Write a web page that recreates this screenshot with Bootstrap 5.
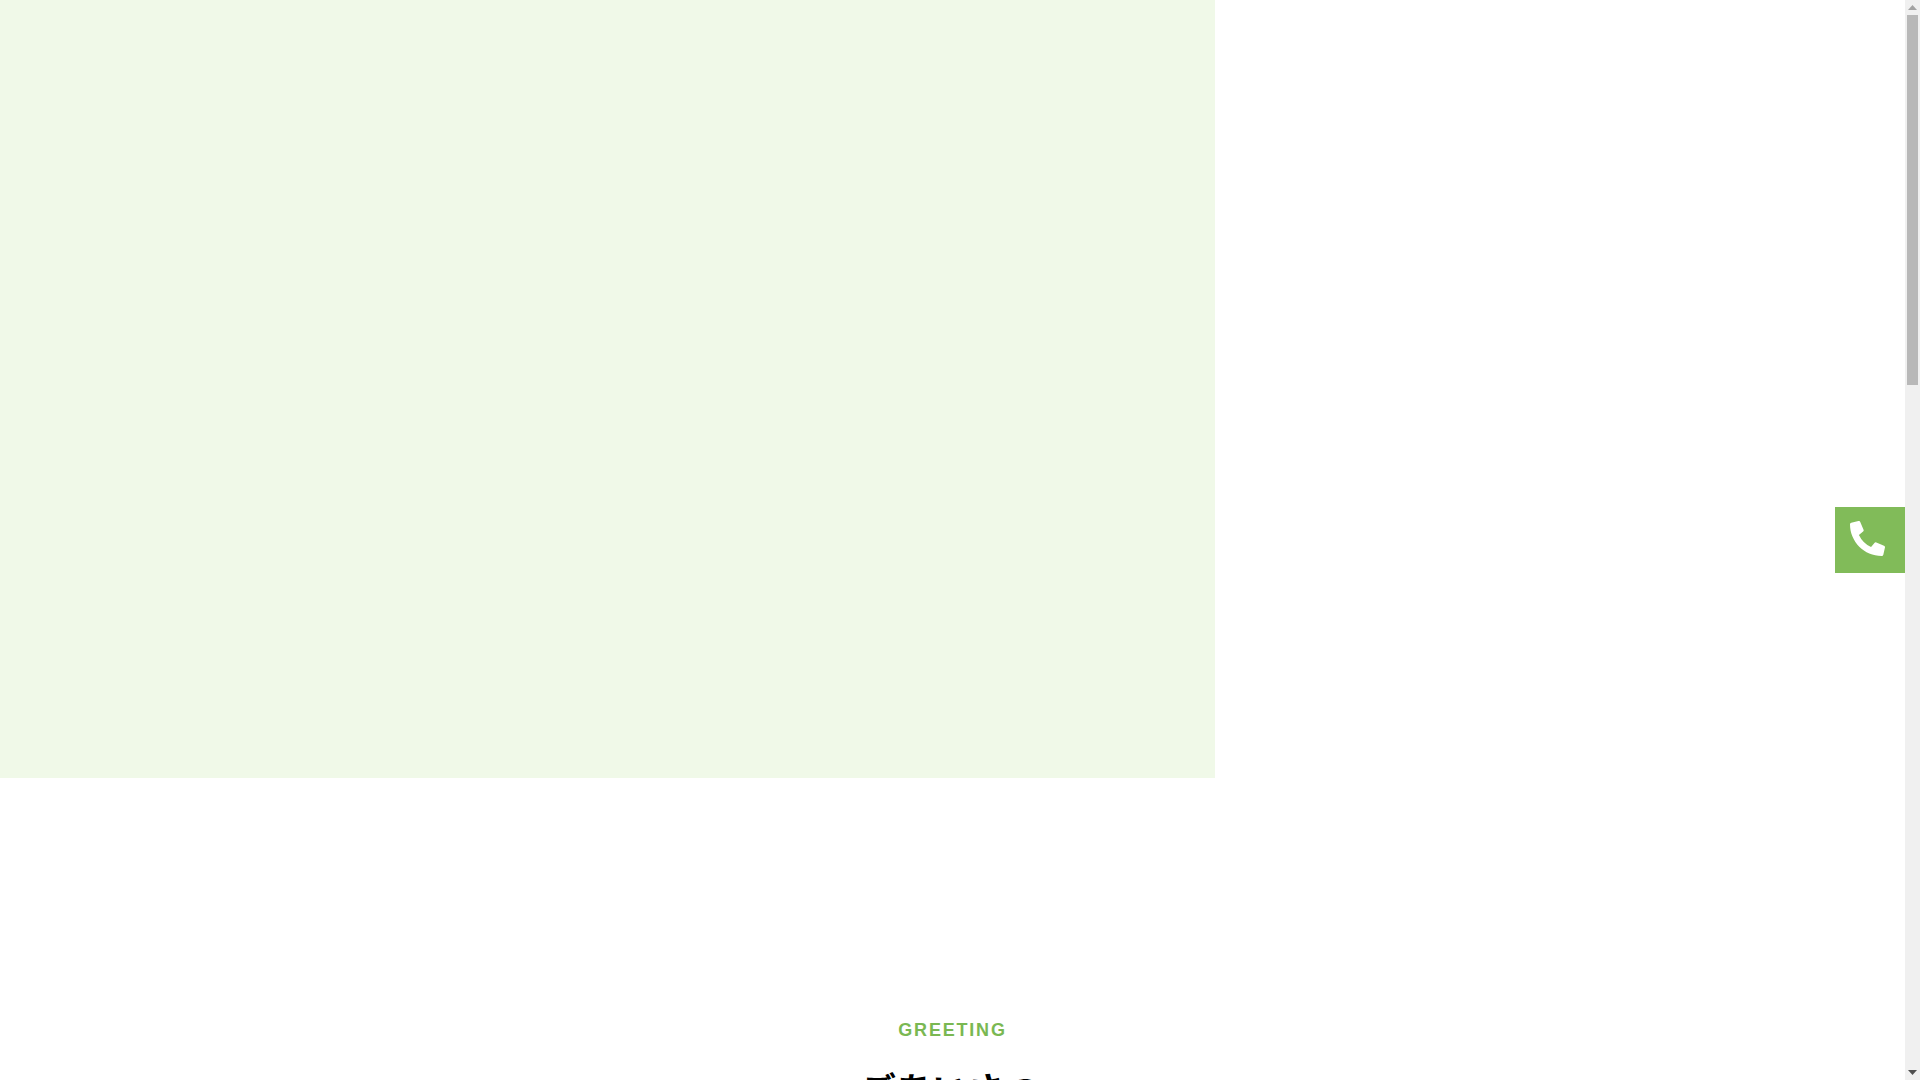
<!DOCTYPE html>
<html lang="ja">
<head>
<meta charset="utf-8">
<title>Greeting</title>
<link href="https://cdn.jsdelivr.net/npm/bootstrap@5.3.0/dist/css/bootstrap.min.css" rel="stylesheet">
<style>
html, body { height: 1080px; overflow: hidden; }
body { font-family: "Liberation Sans", "Noto Sans CJK JP", sans-serif; color: #000; background: #fff; }
.page-main { width: 1905px; height: 1080px; overflow: hidden; }
.hero-tint { width: 1215px; height: 778px; background: #f0f9e8; }
.greet-sec { padding-top: 239px; }
.greet-en { color: #7ab852; font-size: 18px; font-weight: 700; letter-spacing: 1.8px; line-height: 26px; }
.greet-ja { font-size: 36px; font-weight: 700; line-height: 52px; margin-top: 19px; padding-right: 5px; font-family: "Noto Sans CJK JP", sans-serif; }
.tel-float { position: fixed; top: 507px; right: 15px; width: 70px; height: 66px; background: #81bb59; }
.tel-float svg { width: 35px; height: 35px; margin-left: 15px; margin-top: 14px; fill: #fff; }
.fake-bar { width: 15px; height: 1080px; background: #f0f0f0; }
.fake-arrow { height: 15px; }
.fake-arrow svg { width: 9px; height: 5px; }
.fake-up { fill: #a3a3a3; }
.fake-down { fill: #505050; }
.fake-thumb { width: 11px; height: 370px; background: #b8b8b8; }
</style>
</head>
<body>
<div class="d-flex">
  <main class="page-main">
    <div class="hero-tint"></div>
    <section class="greet-sec text-center">
      <p class="greet-en mb-0">GREETING</p>
      <h2 class="greet-ja mb-0">ごあいさつ</h2>
    </section>
  </main>
  <div class="fake-bar d-flex flex-column align-items-center flex-shrink-0">
    <div class="fake-arrow d-flex align-items-center justify-content-center"><svg class="fake-up" viewBox="0 0 9 5"><path d="M4.5 0L9 5H0z"/></svg></div>
    <div class="fake-thumb"></div>
    <div class="fake-arrow d-flex align-items-center justify-content-center mt-auto"><svg class="fake-down" viewBox="0 0 9 5"><path d="M0 0H9L4.5 5z"/></svg></div>
  </div>
</div>
<a class="tel-float d-block" href="#" aria-label="電話">
  <svg viewBox="0 0 512 512"><path d="M497.39 361.8l-112-48a24 24 0 0 0-28 6.9l-49.6 60.6A370.66 370.66 0 0 1 130.6 204.11l60.6-49.6a23.94 23.94 0 0 0 6.9-28l-48-112A24.16 24.16 0 0 0 122.6.61l-104 24A24 24 0 0 0 0 48c0 256.5 207.9 464 464 464a24 24 0 0 0 23.4-18.6l24-104a24.29 24.29 0 0 0-14.01-27.6z"/></svg>
</a>
<script src="https://cdn.jsdelivr.net/npm/bootstrap@5.3.0/dist/js/bootstrap.bundle.min.js"></script>
</body>
</html>
